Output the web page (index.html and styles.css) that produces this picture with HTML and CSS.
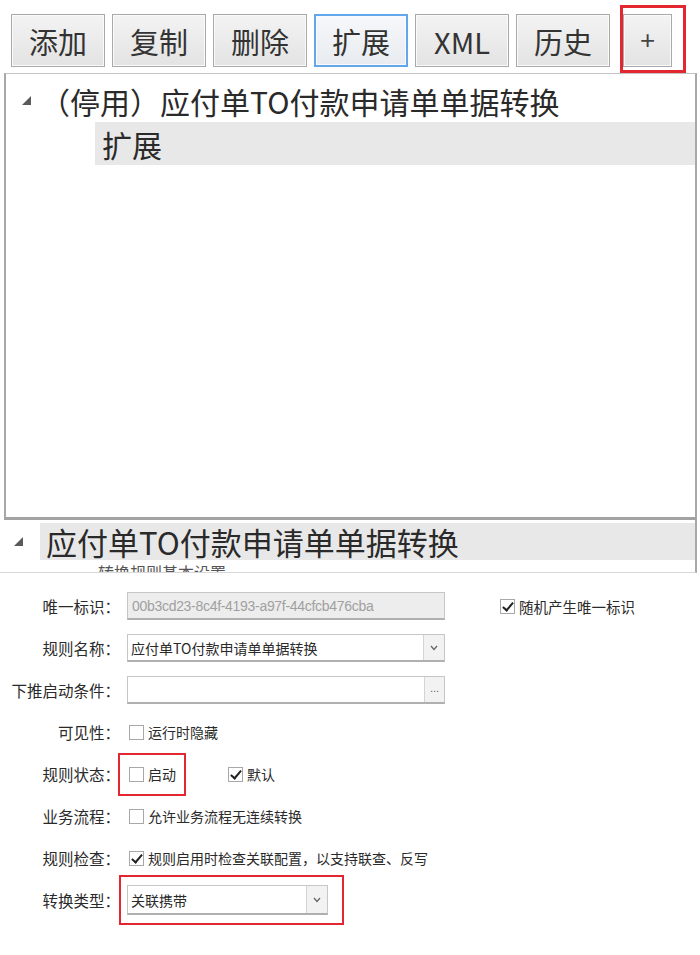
FILE: index.html
```html
<!DOCTYPE html>
<html>
<head>
    <meta charset="utf-8">
    <link rel="stylesheet" href="styles.css">
</head>

<body>
    <div class="toolbar">
        <button class="tb-btn">添加</button>
        <button class="tb-btn">复制</button>
        <button class="tb-btn">删除</button>
        <button class="tb-btn active">扩展</button>
        <button class="tb-btn">XML</button>
        <button class="tb-btn">历史</button>
        <div class="mark plus-mark">
            <button class="tb-btn plus">+</button>
        </div>
    </div>

    <div class="tree">
        <div class="tree-row">
            <span class="tri"></span>
            <span class="tree-text">（停用）应付单TO付款申请单单据转换</span>
        </div>
        <div class="tree-row sub">
            <span class="tree-sel">扩展</span>
        </div>
    </div>

    <div class="section">
        <div class="sec-head">
            <span class="tri"></span>
            <span class="sec-bar">应付单TO付款申请单单据转换</span>
        </div>
        <div class="sec-next">转换规则基本设置</div>
    </div>

    <form class="rule-form">
        <div class="row">
            <label class="lbl">唯一标识：</label>
            <div class="field disabled">00b3cd23-8c4f-4193-a97f-44cfcb476cba</div>
            <span class="chk random"><span class="box checked"></span>随机产生唯一标识</span>
        </div>
        <div class="row">
            <label class="lbl">规则名称：</label>
            <div class="field">
                <span class="field-val">应付单TO付款申请单单据转换</span>
                <span class="drop"><svg width="8" height="6" viewBox="0 0 8 6"><polyline points="1,1 4,4.5 7,1" fill="none" stroke="#666" stroke-width="1.3"/></svg></span>
            </div>
        </div>
        <div class="row">
            <label class="lbl">下推启动条件：</label>
            <div class="field">
                <span class="field-val"></span>
                <span class="drop dots">...</span>
            </div>
        </div>
        <div class="row">
            <label class="lbl">可见性：</label>
            <span class="chk first"><span class="box"></span>运行时隐藏</span>
        </div>
        <div class="row">
            <label class="lbl">规则状态：</label>
            <div class="mark state-mark">
                <span class="chk"><span class="box"></span>启动</span>
            </div>
            <span class="chk default"><span class="box checked"></span>默认</span>
        </div>
        <div class="row">
            <label class="lbl">业务流程：</label>
            <span class="chk first"><span class="box"></span>允许业务流程无连续转换</span>
        </div>
        <div class="row">
            <label class="lbl">规则检查：</label>
            <span class="chk first"><span class="box checked"></span>规则启用时检查关联配置，以支持联查、反写</span>
        </div>
        <div class="row tall">
            <label class="lbl">转换类型：</label>
            <div class="mark type-mark">
                <div class="field small">
                    <span class="field-val">关联携带</span>
                    <span class="drop"><svg width="8" height="6" viewBox="0 0 8 6"><polyline points="1,1 4,4.5 7,1" fill="none" stroke="#666" stroke-width="1.3"/></svg></span>
                </div>
            </div>
        </div>
    </form>
</body>
</html>
```

FILE: styles.css
```css
body {
    margin: 0;
    width: 700px;
    min-height: 955px;
    background: #fff;
    color: #2a2a2a;
    font-family: "Noto Sans CJK SC", "Liberation Sans", sans-serif;
}

.toolbar {
    display: flex;
    align-items: flex-start;
    gap: 7px;
    padding: 14px 0 0 11px;
}

.tb-btn {
    width: 94px;
    height: 53px;
    box-sizing: border-box;
    border: 1px solid #a9a9a9;
    background: linear-gradient(#f3f3f3, #e3e3e3);
    box-shadow: inset 0 0 0 1px #fafafa;
    font-family: "Noto Sans CJK SC", sans-serif;
    font-size: 29px;
    color: #333;
    padding: 0;
}

.tb-btn.active {
    border: 2px solid #62a6ec;
    background: linear-gradient(#f6f8fb, #e8ebef);
}

.tb-btn.plus {
    width: 49px;
    font-family: "Liberation Sans", sans-serif;
    font-size: 26px;
    color: #444;
}

.mark {
    border: 2px solid #e3262f;
}

.plus-mark {
    margin: -9px 0 0 3px;
    border-width: 3px;
    padding: 6px 11px 3px 0;
}

.tree {
    height: 447px;
    box-sizing: border-box;
    margin: 0 3px 0 4px;
    border: 2px solid #a8a8a8;
    border-top: 1px solid #c4c4c4;
    border-bottom: 3px solid #a2a2a2;
    padding-top: 5px;
}

.tree-row {
    display: flex;
    align-items: center;
    height: 43px;
    font-size: 30px;
}

.tri {
    width: 0;
    height: 0;
    border-left: 9px solid transparent;
    border-bottom: 9px solid #5a5a5a;
}

.tree-row .tri {
    margin-left: 16px;
}

.tree-text {
    margin-left: 9px;
}

.tree-row.sub {
    padding-left: 89px;
}

.tree-sel {
    flex: 1;
    align-self: stretch;
    display: flex;
    align-items: center;
    padding-left: 7px;
    background: #e8e8e8;
}

.section {
    height: 52px;
    overflow: hidden;
    margin-right: 3px;
    border-right: 2px solid #a8a8a8;
    border-bottom: 1px solid #d8d8d8;
}

.sec-head {
    display: flex;
    align-items: center;
    margin-top: 3px;
    height: 37px;
}

.sec-head .tri {
    margin-left: 14px;
}

.sec-bar {
    flex: 1;
    align-self: stretch;
    display: flex;
    align-items: center;
    margin-left: 17px;
    padding-left: 6px;
    background: #e8e8e8;
    font-size: 31px;
    line-height: 37px;
}

.sec-next {
    padding-left: 98px;
    font-size: 16px;
    line-height: 24px;
    color: #555;
}

.rule-form {
    padding-top: 12px;
    font-size: 15.5px;
}

.row {
    display: flex;
    align-items: center;
    height: 42px;
}

.row.tall {
    height: 50px;
    margin-top: -4px;
}

.lbl {
    width: 120px;
    text-align: right;
    flex-shrink: 0;
}

.field {
    display: flex;
    align-items: stretch;
    width: 318px;
    height: 28px;
    box-sizing: border-box;
    margin-left: 7px;
    border: 1px solid #c6c6c6;
    border-bottom: 2px solid #b0b0b0;
    background: #fff;
    font-size: 14px;
}

.field.disabled {
    align-items: center;
    padding-left: 4px;
    background: #ededed;
    color: #a0a0a0;
    font-family: "Liberation Sans", sans-serif;
    font-size: 14px;
    letter-spacing: -0.3px;
}

.field-val {
    flex: 1;
    display: flex;
    align-items: center;
    padding-left: 3px;
}

.drop {
    width: 20px;
    display: flex;
    align-items: center;
    justify-content: center;
    border-left: 1px solid #d4d4d4;
    background: #f2f2f2;
    color: #666;
}

.drop.dots {
    font-family: "Liberation Sans", sans-serif;
    font-size: 11px;
    letter-spacing: 0;
    padding-bottom: 3px;
    box-sizing: border-box;
}

.chk {
    display: flex;
    align-items: center;
    gap: 4px;
    font-size: 14px;
}

.chk.first {
    margin-left: 9px;
}

.chk.random {
    margin-left: 55px;
    font-size: 14.5px;
}

.chk.default {
    margin-left: 42px;
}

.box {
    width: 13px;
    height: 13px;
    border: 1px solid #a8a8a8;
    background: #fff;
    position: relative;
}

.box.checked::after {
    content: "";
    position: absolute;
    left: 4px;
    top: 0;
    width: 4px;
    height: 9px;
    border: solid #222;
    border-width: 0 2px 2px 0;
    transform: rotate(40deg);
}

.state-mark {
    margin-left: -2px;
    height: 39px;
    display: flex;
    align-items: center;
    padding: 0 8px 0 9px;
}

.type-mark {
    margin-left: -1px;
    padding: 8px 14px 8px 6px;
}

.field.small {
    width: 201px;
    height: 30px;
    margin-left: 0;
}
```
